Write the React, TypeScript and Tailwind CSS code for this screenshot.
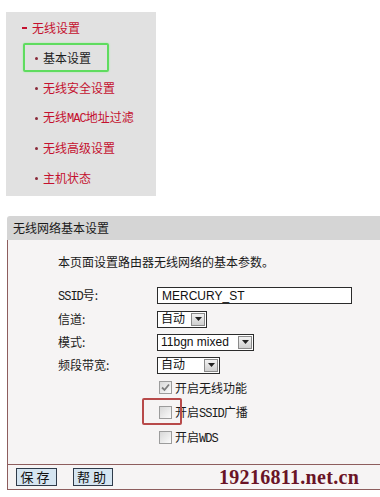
const cjk = { fontFamily: '"Noto Sans CJK SC", "Liberation Sans", sans-serif' };
const mono = { fontFamily: '"Liberation Mono", monospace' };

const menuItems = [
  { label: '基本设置', active: true },
  { label: '无线安全设置' },
  { label: <>无线<span className="tracking-[-1px]" style={mono}>MAC</span>地址过滤</> },
  { label: '无线高级设置' },
  { label: '主机状态' },
];

function Select({ value, width }: { value: string; width: string }) {
  return (
    <div className={`flex h-[17px] items-center border border-[#2b2b2b] bg-white ${width}`}>
      <span className="flex-1 pl-[3px] text-[12px] leading-none text-[#111]" style={{ fontFamily: '"Liberation Sans", "Noto Sans CJK SC", sans-serif' }}>
        {value}
      </span>
      <span className="mr-[1px] flex h-[13px] w-[14px] items-center justify-center border border-[#8a8a8a] bg-gradient-to-b from-[#f2f2f2] to-[#cfcfcf]">
        <svg width="7" height="4" viewBox="0 0 7 4">
          <path d="M0 0h7L3.5 4z" fill="#222" />
        </svg>
      </span>
    </div>
  );
}

function Checkbox({ checked }: { checked?: boolean }) {
  return (
    <span className="flex h-[13px] w-[13px] items-center justify-center border border-[#9c9c9c] bg-gradient-to-br from-[#d8d8d8] to-[#fbfbfb]">
      {checked && (
        <svg width="9" height="9" viewBox="0 0 9 9">
          <path d="M1 4.5l2.5 2.5L8 1.5" stroke="#7d7d7d" strokeWidth="1.8" fill="none" />
        </svg>
      )}
    </span>
  );
}

export default function App() {
  return (
    <div className="relative h-[497px] w-[380px] overflow-hidden bg-white text-[12px]" style={cjk}>
      {/* 左侧菜单 */}
      <div className="ml-[6px] mt-[12px] h-[184px] w-[150px] bg-[#e1e1e1]">
        <div className="flex h-[31px] items-center pl-[16px] text-[#c4112f]">
          <span className="h-[2px] w-[5px] bg-[#c4112f]" />
          <span className="ml-[5px] leading-none">无线设置</span>
        </div>
        {menuItems.map((item, i) => (
          <div key={i} className="relative flex h-[30px] items-center pl-[29px]">
            {item.active && (
              <span className="absolute left-[17px] top-0 h-[29px] w-[86px] rounded-[2px] border-2 border-[#5fdc5f] shadow-[0_0_2px_#9cf09c]" />
            )}
            <span className="h-[3px] w-[3px] rounded-full bg-[#8a2a3a]" />
            <span className={`ml-[5px] leading-none ${item.active ? 'text-[#1e1e1e]' : 'text-[#c4112f]'}`}>{item.label}</span>
          </div>
        ))}
      </div>

      {/* 无线网络基本设置 */}
      <div className="ml-[7px] mt-[20px] w-[373px]">
        <div className="flex h-[24px] items-center rounded-tl-[3px] bg-[#d5d5d5] pl-[6px] text-[#1a1a1a]">
          无线网络基本设置
        </div>
        <div className="flex h-[250px] flex-col border-b border-l border-[#8d5d5d] bg-[#f6f4f4]">
          <div className="pl-[50px] pt-[14px]">
            <div className="h-[16px] leading-[16px] text-[#1a1a1a]">本页面设置路由器无线网络的基本参数。</div>

            <div className="mt-[17px] flex h-[17px] items-center">
              <span className="w-[99px] text-[#1a1a1a]">
                <span style={mono} className="tracking-[-1px]">SSID</span>号:
              </span>
              <div className="flex h-[17px] w-[195px] items-center border border-[#2b2b2b] bg-white pl-[4px] text-[12px] text-[#111]" style={{ fontFamily: '"Liberation Sans", sans-serif' }}>
                MERCURY_ST
              </div>
            </div>

            <div className="mt-[6px] flex flex-col gap-[5px]">
              <div className="flex items-center">
                <span className="w-[99px] text-[#1a1a1a]">信道:</span>
                <Select value="自动" width="w-[50px]" />
              </div>
              <div className="flex items-center">
                <span className="w-[99px] text-[#1a1a1a]">模式:</span>
                <Select value="11bgn mixed" width="w-[97px]" />
              </div>
              <div className="flex items-center">
                <span className="w-[99px] text-[#1a1a1a]">频段带宽:</span>
                <Select value="自动" width="w-[63px]" />
              </div>
            </div>

            <div className="mt-[7px] flex flex-col gap-[12px] pl-[101px]">
              <div className="flex h-[13px] items-center">
                <Checkbox checked />
                <span className="ml-[3px] leading-none text-[#1a1a1a]">开启无线功能</span>
              </div>
              <div className="relative flex h-[13px] items-center">
                <span className="absolute left-[-17px] top-[-8px] h-[27px] w-[40px] rounded-[2px] border-2 border-[#b84a4a]" />
                <Checkbox />
                <span className="ml-[3px] leading-none text-[#1a1a1a]">
                  开启<span style={mono} className="tracking-[-1px]">SSID</span>广播
                </span>
              </div>
              <div className="flex h-[13px] items-center">
                <Checkbox />
                <span className="ml-[3px] leading-none text-[#1a1a1a]">
                  开启<span style={mono} className="tracking-[-1px]">WDS</span>
                </span>
              </div>
            </div>
          </div>

          <div className="mt-auto flex h-[25px] items-center border-t border-[#8d5d5d] pl-[8px]">
            <button className="flex h-[18px] w-[41px] items-center justify-center border border-[#2f3b4a] bg-[#d5e5f1] text-[13px] tracking-[3px] text-[#111]">
              保存
            </button>
            <button className="ml-[16px] flex h-[18px] w-[40px] items-center justify-center border border-[#2f3b4a] bg-[#d5e5f1] text-[13px] tracking-[3px] text-[#111]">
              帮助
            </button>
            <span className="ml-[106px] text-[20px] font-bold leading-none tracking-[0.3px] text-[#6a1426]" style={{ fontFamily: '"Liberation Serif", serif' }}>
              19216811.net.cn
            </span>
          </div>
        </div>
      </div>
    </div>
  );
}
